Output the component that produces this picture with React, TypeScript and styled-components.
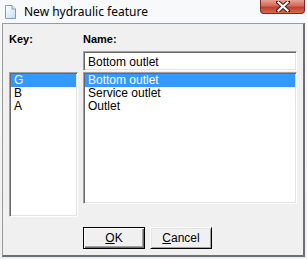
import React, { useState } from "react";
import styled, { createGlobalStyle } from "styled-components";

const GlobalStyle = createGlobalStyle`
  html, body {
    margin: 0;
    padding: 0;
    background: #f4f6f8;
  }
`;

const Window = styled.div`
  width: 307px;
  height: 259px;
  box-sizing: border-box;
  padding: 0 2px 2px 2px;
  display: flex;
  flex-direction: column;
  background: linear-gradient(to bottom, #f7f9fb 0%, #eef1f4 100%);
  font-family: "Liberation Sans", Arial, sans-serif;
`;

const TitleBar = styled.div`
  height: 23px;
  display: flex;
  align-items: flex-start;
  position: relative;
`;

const TitleIcon = styled.svg`
  margin: 5px 0 0 3px;
  width: 11px;
  height: 14px;
`;

const TitleText = styled.span`
  margin: 4px 0 0 8px;
  font-family: "Noto Sans", "Open Sans", sans-serif;
  font-size: 12px;
  line-height: 16px;
  color: #000;
`;

const CloseButton = styled.div`
  position: absolute;
  top: 0;
  right: 0;
  width: 45px;
  height: 14px;
  box-sizing: border-box;
  border: 1px solid #7d2a22;
  border-top: none;
  border-radius: 0 0 4px 4px;
  background: linear-gradient(to bottom, #e6a193 0%, #d46a58 45%, #c1402c 55%, #d26a4f 100%);
  display: flex;
  align-items: center;
  justify-content: center;
`;

const Frame = styled.div`
  flex: 1;
  box-sizing: border-box;
  border-top: 1px solid #9a9a9a;
  border-left: 1px solid #9a9a9a;
  border-right: 2px solid #6e6e6e;
  border-bottom: 2px solid #6e6e6e;
  background: #f0f0f0;
  padding: 0 5px 0 6px;
`;

const Layout = styled.div`
  display: grid;
  grid-template-columns: 69px 214px;
  column-gap: 5px;
`;

const Label = styled.div`
  height: 27px;
  box-sizing: border-box;
  padding-top: 9px;
  font-size: 11px;
  line-height: 13px;
  font-weight: bold;
  color: #000;
`;

const Sunken = styled.div`
  box-sizing: border-box;
  background: #fff;
  border-top: 1px solid #a0a0a0;
  border-left: 1px solid #a0a0a0;
  border-right: 1px solid #fff;
  border-bottom: 1px solid #fff;
  box-shadow: inset 1px 1px 0 #696969, inset -1px -1px 0 #e3e3e3;
`;

const Input = styled(Sunken)`
  height: 20px;
  padding: 3px 4px 0 4px;
  font-size: 12px;
  line-height: 14px;
  color: #000;
`;

const Spacer = styled.div`
  height: 21px;
`;

const NameField = styled.div`
  display: flex;
  flex-direction: column;
  gap: 1px;
`;

const List = styled(Sunken)<{ $height: number }>`
  height: ${(p) => p.$height}px;
  padding: 1px;
`;

const Item = styled.div<{ $selected?: boolean }>`
  height: 13px;
  padding-left: 3px;
  font-size: 12px;
  line-height: 13px;
  white-space: nowrap;
  background: ${(p) => (p.$selected ? "#3399ff" : "transparent")};
  color: ${(p) => (p.$selected ? "#fff" : "#000")};
  cursor: default;
`;

const ButtonRow = styled.div`
  grid-column: 2;
  margin-top: 10px;
  display: flex;
  gap: 5px;
`;

const Button = styled.button<{ $default?: boolean }>`
  width: 62px;
  height: 22px;
  box-sizing: border-box;
  padding: 0;
  font-family: "Liberation Sans", Arial, sans-serif;
  font-size: 12px;
  color: #000;
  background: #f0f0f0;
  border: 1px solid ${(p) => (p.$default ? "#000" : "#fff")};
  border-right-color: #000;
  border-bottom-color: #000;
  box-shadow: ${(p) =>
    p.$default
      ? "inset 1px 1px 0 #fff, inset -1px -1px 0 #696969, inset -2px -2px 0 #a0a0a0"
      : "inset 1px 1px 0 #e3e3e3, inset -1px -1px 0 #a0a0a0"};
  u {
    text-decoration: underline;
  }
`;

const keys = ["G", "B", "A"];
const names = ["Bottom outlet", "Service outlet", "Outlet"];

export default function App() {
  const [keyIdx, setKeyIdx] = useState(0);
  const [nameIdx, setNameIdx] = useState(0);

  return (
    <>
      <GlobalStyle />
      <Window>
        <TitleBar>
          <TitleIcon viewBox="0 0 11 14">
            <defs>
              <linearGradient id="doc" x1="0" y1="0" x2="1" y2="1">
                <stop offset="0" stopColor="#ffffff" />
                <stop offset="1" stopColor="#c9dcf2" />
              </linearGradient>
            </defs>
            <path d="M0.5 0.5 H7 L10.5 4 V13.5 H0.5 Z" fill="url(#doc)" stroke="#7f9db9" />
            <path d="M7 0.5 V4 H10.5" fill="#e8f0fa" stroke="#7f9db9" />
          </TitleIcon>
          <TitleText>New hydraulic feature</TitleText>
          <CloseButton>
            <svg width="14" height="11" viewBox="0 0 14 11">
              <path
                d="M2 1 L12 10 M12 1 L2 10"
                stroke="#4a1a14"
                strokeWidth="4"
                strokeLinecap="square"
              />
              <path
                d="M2.5 1.5 L11.5 9.5 M11.5 1.5 L2.5 9.5"
                stroke="#fff"
                strokeWidth="2.2"
                strokeLinecap="square"
              />
            </svg>
          </CloseButton>
        </TitleBar>
        <Frame>
          <Layout>
            <div>
              <Label>Key:</Label>
              <Spacer />
              <List $height={145}>
                {keys.map((k, i) => (
                  <Item key={k} $selected={i === keyIdx} onClick={() => setKeyIdx(i)}>
                    {k}
                  </Item>
                ))}
              </List>
            </div>
            <div>
              <Label>Name:</Label>
              <NameField>
                <Input>{names[nameIdx]}</Input>
                <List $height={132}>
                  {names.map((n, i) => (
                    <Item key={n} $selected={i === nameIdx} onClick={() => setNameIdx(i)}>
                      {n}
                    </Item>
                  ))}
                </List>
              </NameField>
            </div>
            <ButtonRow>
              <Button $default>
                <u>O</u>K
              </Button>
              <Button>
                <u>C</u>ancel
              </Button>
            </ButtonRow>
          </Layout>
        </Frame>
      </Window>
    </>
  );
}
